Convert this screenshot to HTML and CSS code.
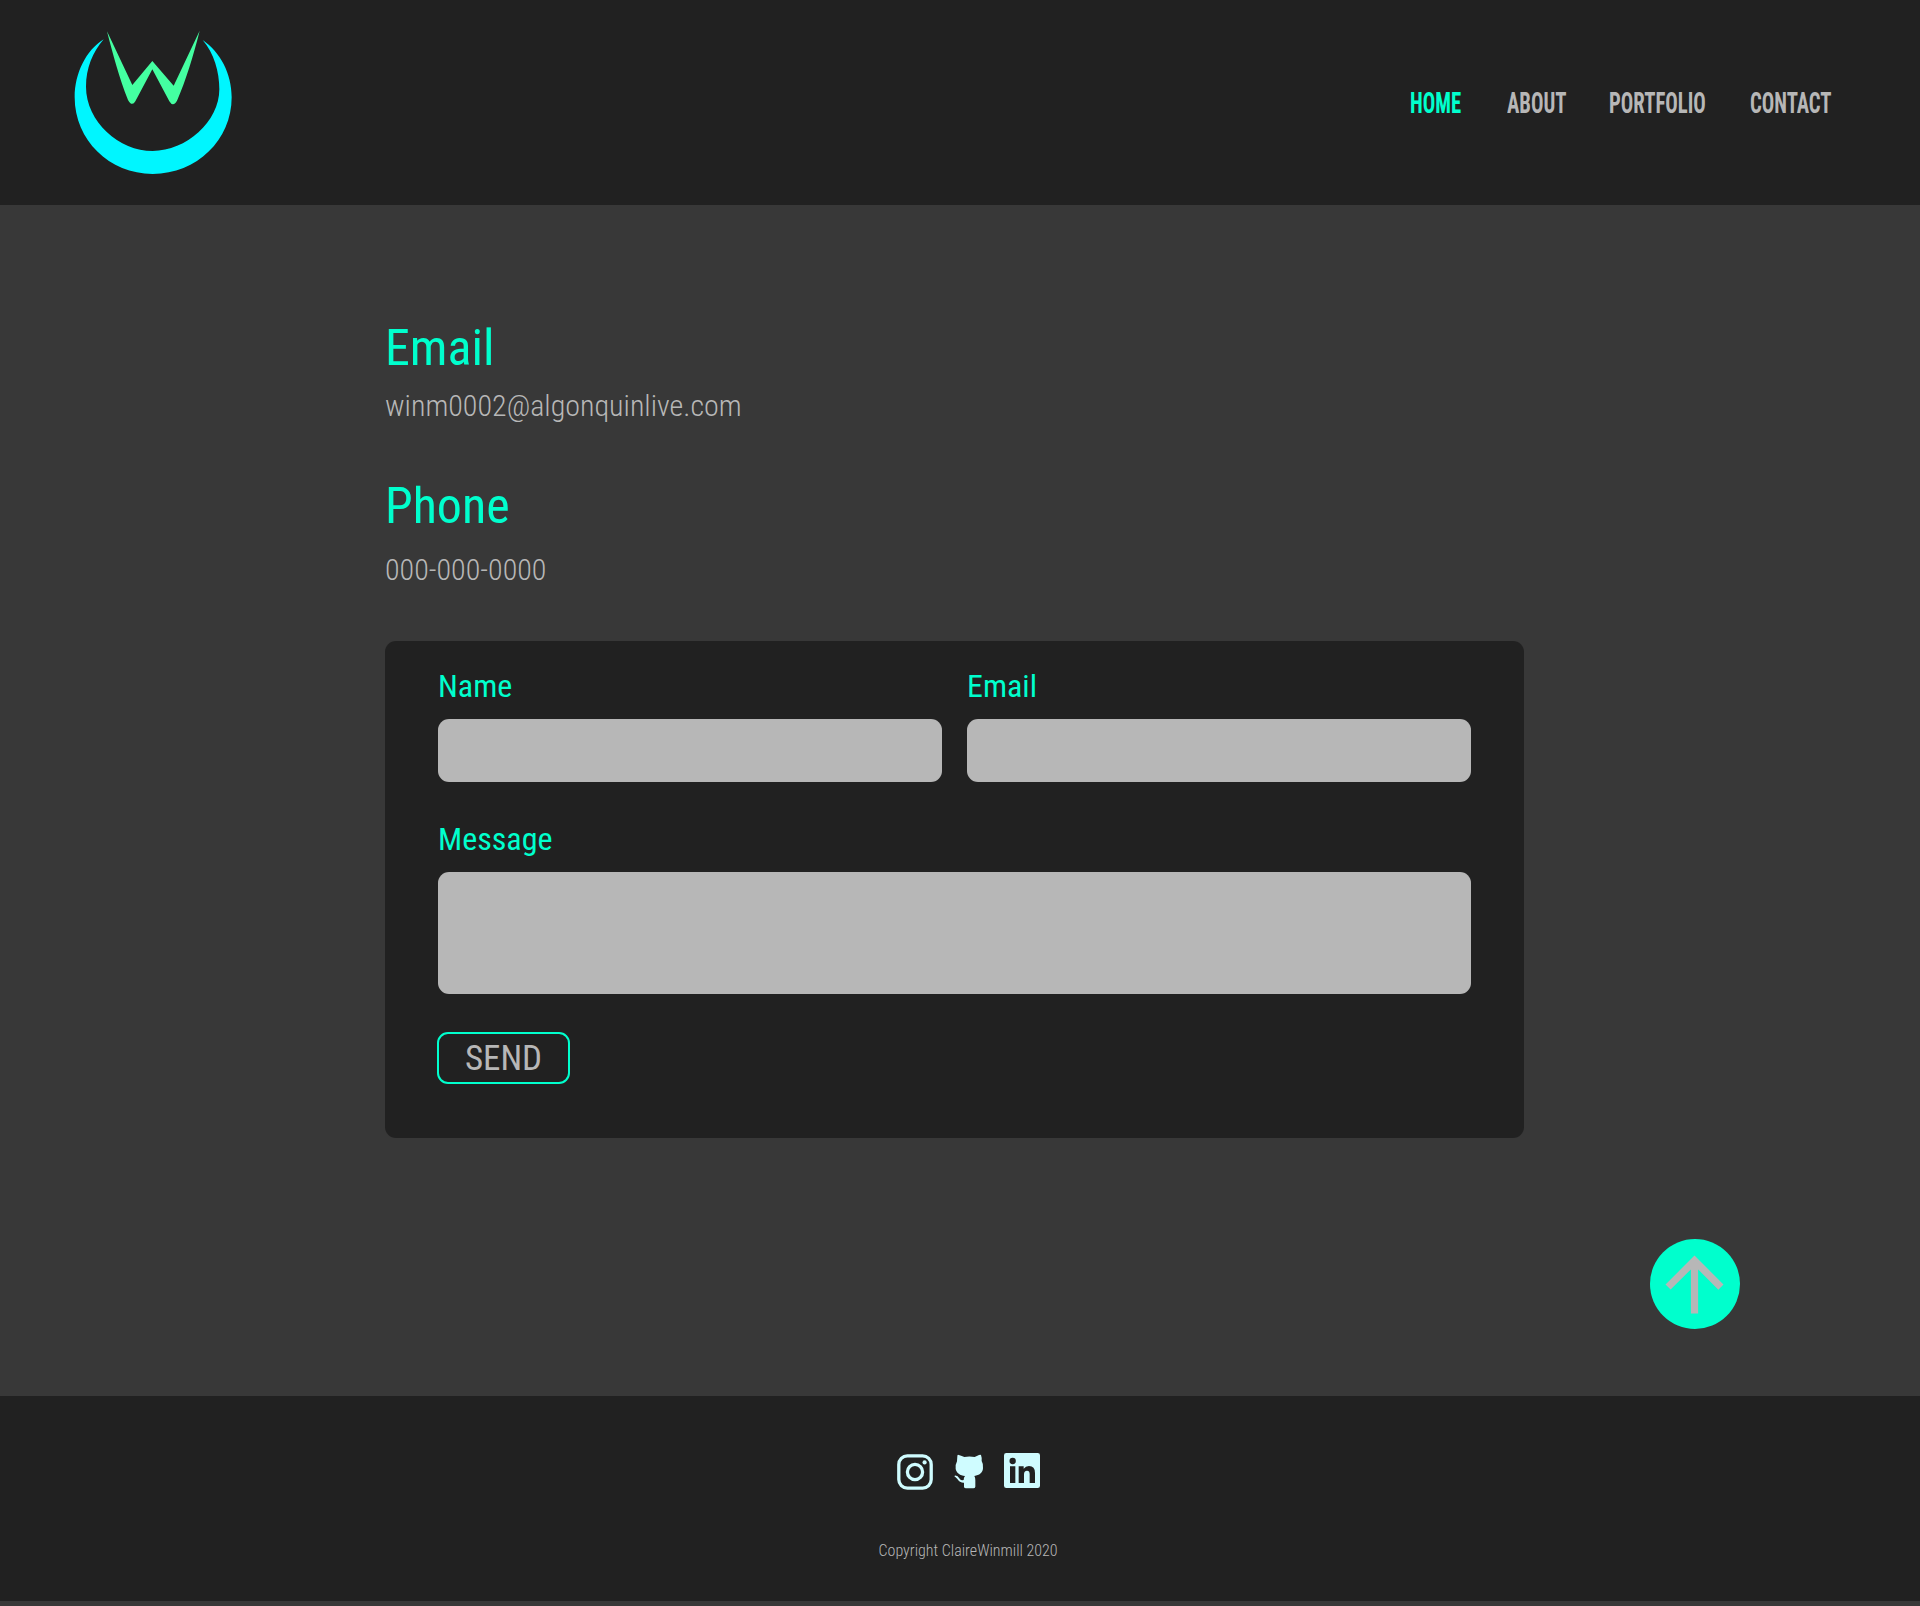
FILE: index.html
```html
<!DOCTYPE html>
<html lang="en">
<head>
<meta charset="utf-8">
<title>Contact</title>
<link rel="stylesheet" href="styles.css">
</head>
<body>
<header class="site-header">
  <a class="logo" href="#" aria-label="Home">
    <svg width="190" height="190" viewBox="0 0 570 570">
      <path fill="#00f6ff" d="M131 58C78 91 44 160 44 232C44 360 148 462 278 462C410 462 515 360 515 232C515 160 481 97 428 60C462 100 478 155 478 208C478 305 378 393 278 393C178 393 78 305 78 200C78 145 98 96 131 58Z"/>
      <path fill="#44ffa1" d="M141 34L217 195L277 123L341 197L419 32C400 108 377 182 352 240Q340 264 328 244L277 148L226 244Q216 261 204 240C178 176 158 100 141 34Z"/>
    </svg>
  </a>
  <nav class="nav">
    <a class="nav-home active" href="#"><span>HOME</span></a>
    <a class="nav-about" href="#"><span>ABOUT</span></a>
    <a class="nav-portfolio" href="#"><span>PORTFOLIO</span></a>
    <a class="nav-contact" href="#"><span>CONTACT</span></a>
  </nav>
</header>
<main class="content">
  <section class="details">
    <h2>Email</h2>
    <p class="email">winm0002@algonquinlive.com</p>
    <h2>Phone</h2>
    <p class="phone">000-000-0000</p>
  </section>
  <form class="card">
    <div class="row">
      <label class="field">Name<input type="text"></label>
      <label class="field">Email<input type="text"></label>
    </div>
    <label class="field message">Message<textarea></textarea></label>
    <button class="send" type="button">SEND</button>
  </form>
  <a class="to-top" href="#" aria-label="Back to top">
    <svg width="87" height="87" viewBox="0 0 24 24"><path fill="#b7b7b7" d="M4 12l1.41 1.41L11 7.83V20h2V7.83l5.58 5.59L20 12l-8-8-8 8z"/></svg>
  </a>
</main>
<footer class="site-footer">
  <div class="social">
    <svg class="instagram" width="36" height="36" viewBox="0 0 36 36" fill="none" stroke="#cffcff" stroke-width="3.3">
      <rect x="1.8" y="1.8" width="32.4" height="32.4" rx="8.6"/><circle cx="18" cy="18" r="7.6"/><circle cx="27.6" cy="8.4" r="2.1" fill="#cffcff" stroke="none"/>
    </svg>
    <svg class="github" width="30" height="35" viewBox="0 0 90 105" fill="#cffcff">
      <path d="M12 2Q10 2 10 7L9 22Q3 33 5 45C8 58 18 64 33 66Q29 71 29 78Q21 80 17 74Q10 63 2 65Q0 67 4 69C13 76 15 87 30 86V99Q31 103 36 103H58Q63 103 64 98V79Q64 70 61 66C76 64 86 57 87 43Q89 31 83 21Q84 11 81 3Q80 1 75 3L62 9Q46 6 31 9Q21 4 12 2Z"/>
    </svg>
    <svg class="linkedin" width="36" height="35" viewBox="0 0 108 105">
      <rect width="108" height="105" rx="7" fill="#cffcff"/>
      <g fill="#212121"><circle cx="26" cy="24" r="9.5"/><path d="M18 40H34V90H18ZM44 40H59V47Q65 39 75 39Q93 39 93 60V90H77V63Q77 53 69 53Q60 53 60 64V90H44Z"/></g>
    </svg>
  </div>
  <p class="copyright">Copyright ClaireWinmill 2020</p>
</footer>
</body>
</html>
```
FILE: styles.css
```css
* { box-sizing: border-box; }
body {
  margin: 0;
  min-height: 1606px;
  background: #383838;
  color: #b7b7b7;
  font-family: "Roboto Condensed", Roboto, sans-serif;
  font-stretch: 75%;
}
h2, p { margin: 0; }
a { color: inherit; text-decoration: none; }
svg { display: block; }

.site-header {
  display: flex;
  justify-content: space-between;
  height: 205px;
  padding: 0 89px 0 60px;
  background: #212121;
}
.logo { height: 185px; margin-top: 20px; overflow: hidden; }
.nav {
  display: flex;
  align-items: flex-start;
  margin-top: 85px;
  font-size: 30px;
  line-height: 36px;
  font-weight: 700;
}
.nav a { white-space: nowrap; }
.nav span { display: inline-block; transform-origin: 0 50%; transform: scaleX(0.69); }
.nav-home { width: 97px; }
.nav-about { width: 102px; }
.nav-portfolio { width: 141px; }
.nav-contact { width: 81px; }
.active { color: #00ffcd; }

.content {
  display: flex;
  flex-direction: column;
  height: 1191px;
  padding: 113px 180.5px 0 385px;
}
.details { height: 323px; }
.details h2 { color: #00ffcd; font-size: 50px; line-height: 60px; font-weight: 400; }
.details p { font-size: 30px; line-height: 36px; font-weight: 300; }
.details .email { margin: 10px 0 52px; }
.details .phone { padding-top: 16px; }

.card {
  width: 1139px;
  height: 497px;
  padding: 25px 53px 0;
  background: #212121;
  border-radius: 11px;
}
.row { display: flex; gap: 25px; }
.field {
  display: flex;
  flex: 1;
  flex-direction: column;
  gap: 13px;
  color: #00ffcd;
  font-size: 32px;
  line-height: 40px;
}
.field input, .field textarea {
  display: block;
  width: 100%;
  height: 63px;
  margin: 0;
  border: 0;
  border-radius: 11px;
  background: #b7b7b7;
  resize: none;
}
.message { margin-top: 37px; }
.field textarea { height: 122px; }
.send {
  display: block;
  width: 133px;
  height: 52px;
  margin: 38px 0 0 -1px;
  padding: 1px 0 0;
  border: 2px solid #00ffcd;
  border-radius: 11px;
  background: none;
  color: #b7b7b7;
  font: inherit;
  font-size: 35px;
  line-height: 48px;
}
.to-top {
  display: flex;
  align-items: center;
  justify-content: center;
  align-self: flex-end;
  width: 90px;
  height: 90px;
  margin-top: 101px;
  border-radius: 50%;
  background: #00ffcd;
}

.site-footer { height: 205px; padding-top: 57px; background: #212121; }
.social { display: flex; height: 37px; padding-left: 897px; }
.instagram { margin-top: 1px; }
.github { margin: 1px 20px 0 21px; }
.copyright {
  margin-top: 51px;
  padding-left: 878.5px;
  font-size: 16px;
  line-height: 20px;
  font-weight: 300;
}
```
